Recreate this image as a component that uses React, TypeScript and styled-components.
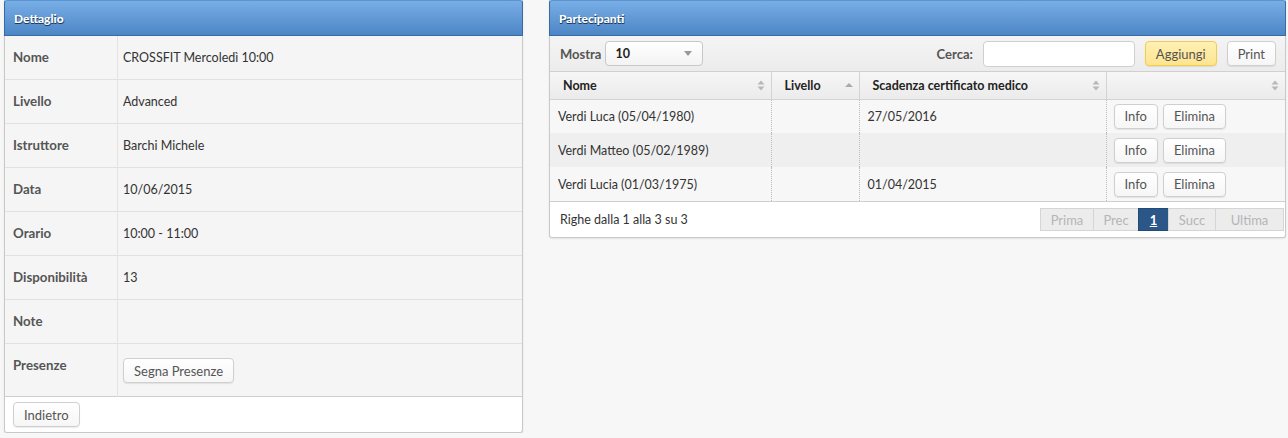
import React from "react";
import styled, { createGlobalStyle } from "styled-components";

const Global = createGlobalStyle`
  html, body { margin: 0; padding: 0; background: #f7f7f7; }
  body { font-family: Lato, "Open Sans", sans-serif; font-size: 12.5px; color: #333; }
  * { box-sizing: border-box; }
`;

const Page = styled.div`
  display: flex;
  align-items: flex-start;
  gap: 26px;
  padding: 0 2px 0 4px;
  width: 1288px;
`;

const Panel = styled.div<{ $w: number }>`
  width: ${(p) => p.$w}px;
  flex: none;
  border: 1px solid #c9c9c9;
  border-top: none;
  border-radius: 0 0 3px 3px;
  background: #f5f5f5;
  box-shadow: 0 1px 2px rgba(0,0,0,0.08);
`;

const PanelHeader = styled.div`
  height: 36px;
  margin: 0 -1px;
  padding: 0 9px;
  display: flex;
  align-items: center;
  background: linear-gradient(#78aee6, #4d86c6);
  border: 1px solid #3a6aa3;
  border-top-color: #5d93cf;
  border-radius: 3px 3px 0 0;
  color: #fff;
  font-weight: 900;
  font-size: 12px;
  text-shadow: 0 1px 0 #1a3a60, 1px 1px 0 rgba(26,58,96,0.6);
`;

const DetailRow = styled.div<{ $h: number; $last?: boolean }>`
  display: grid;
  grid-template-columns: 113px 1fr;
  height: ${(p) => p.$h}px;
  border-bottom: ${(p) => (p.$last ? "none" : "1px solid #e1e1e1")};
`;

const Label = styled.div`
  padding: 13px 8px;
  font-weight: 700;
  font-size: 13.3px;
  color: #555;
  border-right: 1px solid #e3e3e3;
`;

const Value = styled.div<{ $top?: number }>`
  padding: ${(p) => p.$top ?? 14}px 5px;
  color: #333;
`;

const Btn = styled.button<{ $yellow?: boolean; $gap?: number }>`
  font-family: inherit;
  font-size: 13px;
  height: 25px;
  padding: 0 10px;
  margin-left: ${(p) => p.$gap ?? 0}px;
  border-radius: 4px;
  border: 1px solid ${(p) => (p.$yellow ? "#f1cd4b" : "#cfcfcf")};
  background: ${(p) => (p.$yellow ? "linear-gradient(#fff0b3,#fde48f)" : "linear-gradient(#ffffff,#f6f6f6)")};
  color: #555;
  box-shadow: 0 1px 1px rgba(0,0,0,0.08);
  cursor: pointer;
`;

const Footer = styled.div`
  height: 36px;
  display: flex;
  align-items: center;
  padding: 0 8px;
  background: #fff;
  border-top: 1px solid #cfcfcf;
  border-radius: 0 0 3px 3px;
`;

const Toolbar = styled.div`
  height: 36px;
  display: flex;
  align-items: center;
  padding: 0 9px 0 10px;
  background: linear-gradient(#f4f4f4, #ececec);
  border-bottom: 1px solid #d0d0d0;
`;

const ToolLabel = styled.span`
  font-weight: 700;
  color: #555;
  font-size: 13px;
`;

const Select = styled.div`
  margin-left: 4px;
  width: 98px;
  height: 25px;
  border: 1px solid #c8c8c8;
  border-radius: 4px;
  background: linear-gradient(#ffffff, #f3f3f3);
  display: flex;
  align-items: center;
  justify-content: space-between;
  padding: 0 10px 0 9px;
  font-weight: 700;
  color: #222;
  font-size: 12.5px;
`;

const Caret = styled.span`
  width: 0;
  height: 0;
  border-left: 4px solid transparent;
  border-right: 4px solid transparent;
  border-top: 5px solid #999;
`;

const Spacer = styled.div`
  flex: 1;
`;

const SearchInput = styled.input`
  margin-left: 10px;
  width: 152px;
  height: 26px;
  border: 1px solid #cfcfcf;
  border-radius: 4px;
  background: #fff;
  margin-right: 10px;
`;

const Table = styled.table`
  width: 100%;
  border-collapse: collapse;
`;

const Th = styled.th<{ $w?: number }>`
  width: ${(p) => (p.$w ? `${p.$w}px` : "auto")};
  height: 27px;
  text-align: left;
  font-weight: 700;
  color: #222;
  font-size: 12.5px;
  padding: 0 6px 0 13px;
  background: linear-gradient(#f6f6f6, #ebebeb);
  border-right: 1px solid #d3d3d3;
  border-bottom: 1px solid #d3d3d3;
  &:last-child { border-right: none; }
`;

const ThInner = styled.div`
  display: flex;
  align-items: center;
  justify-content: space-between;
`;

const Tr = styled.tr<{ $alt?: boolean }>`
  background: ${(p) => (p.$alt ? "#efefef" : "#f7f7f7")};
`;

const Td = styled.td`
  height: 34px;
  padding: 0 8px;
  color: #333;
  border-right: 1px dotted #bdbdbd;
  &:last-child { border-right: none; padding-left: 7px; }
`;

const RowBtns = styled.div`
  display: flex;
  gap: 5px;
`;

const TableFooter = styled.div`
  height: 36px;
  display: flex;
  align-items: center;
  justify-content: space-between;
  padding: 0 1px 0 10px;
  background: #fff;
  border-top: 1px solid #cfcfcf;
  border-radius: 0 0 3px 3px;
`;

const Pager = styled.div`
  display: flex;
`;

const PageBtn = styled.span<{ $active?: boolean; $w: number }>`
  width: ${(p) => p.$w}px;
  height: 23px;
  display: flex;
  align-items: center;
  justify-content: center;
  font-size: 13px;
  color: ${(p) => (p.$active ? "#fff" : "#b5b5b5")};
  font-weight: ${(p) => (p.$active ? 700 : 400)};
  background: ${(p) => (p.$active ? "#2a5688" : "#ececec")};
  border: 1px solid ${(p) => (p.$active ? "#224a77" : "#d5d5d5")};
  margin-left: -1px;
  text-decoration: ${(p) => (p.$active ? "underline" : "none")};
`;

const SortBoth = () => (
  <svg width="8" height="11" viewBox="0 0 8 11">
    <path d="M4 0.5 L7.5 4.5 H0.5 Z" fill="#b8b8b8" />
    <path d="M4 10.5 L7.5 6.5 H0.5 Z" fill="#b8b8b8" />
  </svg>
);

const SortUp = () => (
  <svg width="8" height="11" viewBox="0 0 8 11">
    <path d="M4 3 L8 7 H0 Z" fill="#aaa" />
  </svg>
);

const details: [string, string][] = [
  ["Nome", "CROSSFIT Mercoledì 10:00"],
  ["Livello", "Advanced"],
  ["Istruttore", "Barchi Michele"],
  ["Data", "10/06/2015"],
  ["Orario", "10:00 - 11:00"],
  ["Disponibilità", "13"],
  ["Note", ""],
];

const people = [
  ["Verdi Luca (05/04/1980)", "", "27/05/2016"],
  ["Verdi Matteo (05/02/1989)", "", ""],
  ["Verdi Lucia (01/03/1975)", "", "01/04/2015"],
];

export default function App() {
  return (
    <>
      <Global />
      <Page>
        <Panel $w={519}>
          <PanelHeader>Dettaglio</PanelHeader>
          {details.map(([k, v]) => (
            <DetailRow key={k} $h={44}>
              <Label>{k}</Label>
              <Value>{v}</Value>
            </DetailRow>
          ))}
          <DetailRow $h={52} $last>
            <Label>Presenze</Label>
            <Value $top={14}>
              <Btn>Segna Presenze</Btn>
            </Value>
          </DetailRow>
          <Footer>
            <Btn>Indietro</Btn>
          </Footer>
        </Panel>
        <Panel $w={737}>
          <PanelHeader>Partecipanti</PanelHeader>
          <Toolbar>
            <ToolLabel>Mostra</ToolLabel>
            <Select>
              10
              <Caret />
            </Select>
            <Spacer />
            <ToolLabel>Cerca:</ToolLabel>
            <SearchInput />
            <Btn $yellow>Aggiungi</Btn>
            <Btn $gap={10}>Print</Btn>
          </Toolbar>
          <Table>
            <thead>
              <tr>
                <Th $w={221}>
                  <ThInner>
                    Nome <SortBoth />
                  </ThInner>
                </Th>
                <Th $w={88}>
                  <ThInner>
                    Livello <SortUp />
                  </ThInner>
                </Th>
                <Th $w={247}>
                  <ThInner>
                    Scadenza certificato medico <SortBoth />
                  </ThInner>
                </Th>
                <Th>
                  <ThInner>
                    <span />
                    <SortBoth />
                  </ThInner>
                </Th>
              </tr>
            </thead>
            <tbody>
              {people.map((p, i) => (
                <Tr key={p[0]} $alt={i % 2 === 1}>
                  <Td>{p[0]}</Td>
                  <Td>{p[1]}</Td>
                  <Td>{p[2]}</Td>
                  <Td>
                    <RowBtns>
                      <Btn>Info</Btn>
                      <Btn>Elimina</Btn>
                    </RowBtns>
                  </Td>
                </Tr>
              ))}
            </tbody>
          </Table>
          <TableFooter>
            <span>Righe dalla 1 alla 3 su 3</span>
            <Pager>
              <PageBtn $w={54}>Prima</PageBtn>
              <PageBtn $w={46}>Prec</PageBtn>
              <PageBtn $w={31} $active>1</PageBtn>
              <PageBtn $w={48}>Succ</PageBtn>
              <PageBtn $w={69}>Ultima</PageBtn>
            </Pager>
          </TableFooter>
        </Panel>
      </Page>
    </>
  );
}
